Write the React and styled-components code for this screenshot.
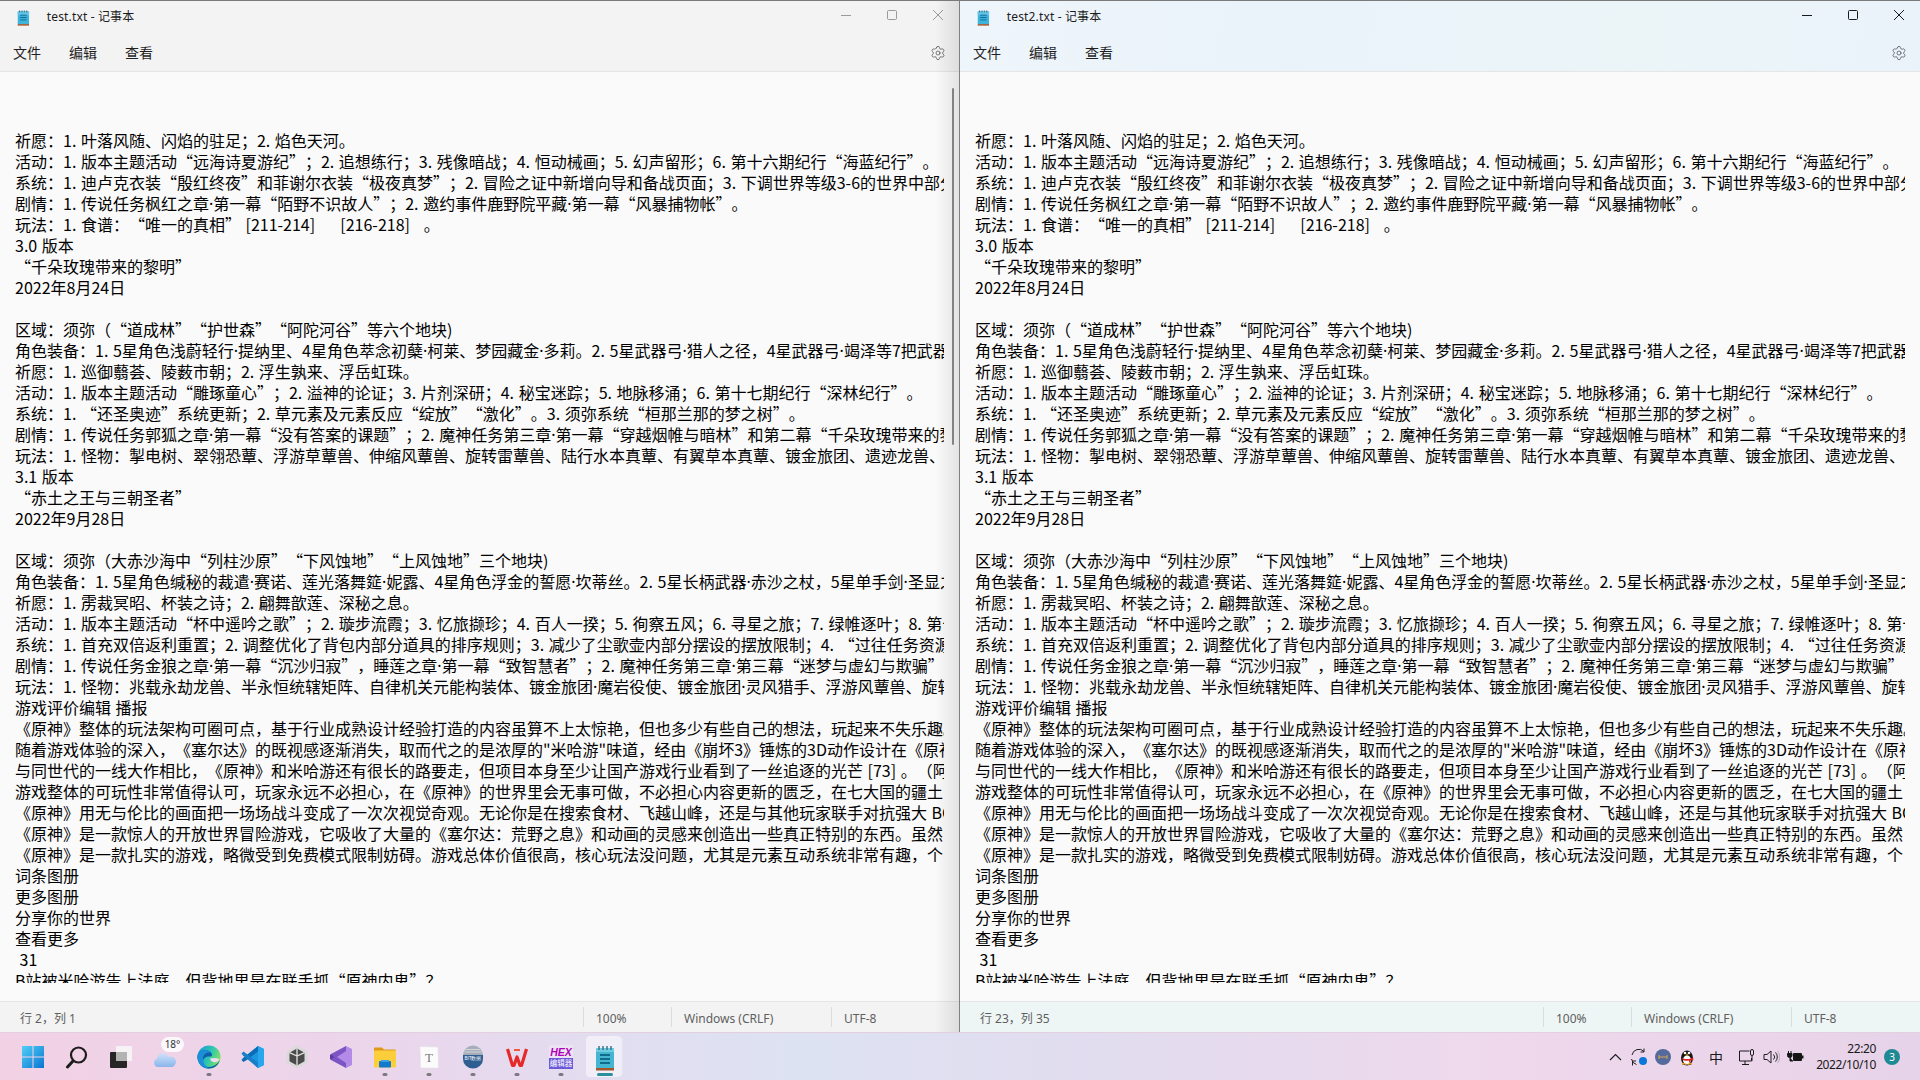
import React from "react";
import styled, { createGlobalStyle } from "styled-components";
import { Settings } from "lucide-react";

const LINES = [
  "祈愿：1. 叶落风随、闪焰的驻足；2. 焰色天河。",
  "活动：1. 版本主题活动“远海诗夏游纪”；2. 追想练行；3. 残像暗战；4. 恒动械画；5. 幻声留形；6. 第十六期纪行“海蓝纪行”。",
  "系统：1. 迪卢克衣装“殷红终夜”和菲谢尔衣装“极夜真梦”；2. 冒险之证中新增向导和备战页面；3. 下调世界等级3-6的世界中部分任务",
  "剧情：1. 传说任务枫红之章·第一幕“陌野不识故人”；2. 邀约事件鹿野院平藏·第一幕“风暴捕物帐”。",
  "玩法：1. 食谱：“唯一的真相” [211-214] 　 [216-218]   。",
  "3.0 版本",
  "“千朵玫瑰带来的黎明”",
  "2022年8月24日",
  "",
  "区域：须弥（“道成林”“护世森”“阿陀河谷”等六个地块)",
  "角色装备：1. 5星角色浅蔚轻行·提纳里、4星角色萃念初蘖·柯莱、梦园藏金·多莉。2. 5星武器弓·猎人之径，4星武器弓·竭泽等7把武器",
  "祈愿：1. 巡御蘙荟、陵薮市朝；2. 浮生孰来、浮岳虹珠。",
  "活动：1. 版本主题活动“雕琢童心”；2. 溢神的论证；3. 片剂深研；4. 秘宝迷踪；5. 地脉移涌；6. 第十七期纪行“深林纪行”。",
  "系统：1. “还圣奥迹”系统更新；2. 草元素及元素反应“绽放”“激化”。3. 须弥系统“桓那兰那的梦之树”。",
  "剧情：1. 传说任务郭狐之章·第一幕“没有答案的课题”；2. 魔神任务第三章·第一幕“穿越烟帷与暗林”和第二幕“千朵玫瑰带来的黎明”",
  "玩法：1. 怪物：掣电树、翠翎恐蕈、浮游草蕈兽、伸缩风蕈兽、旋转雷蕈兽、陆行水本真蕈、有翼草本真蕈、镀金旅团、遗迹龙兽、",
  "3.1 版本",
  "“赤土之王与三朝圣者”",
  "2022年9月28日",
  "",
  "区域：须弥（大赤沙海中“列柱沙原”“下风蚀地”“上风蚀地”三个地块)",
  "角色装备：1. 5星角色缄秘的裁遣·赛诺、莲光落舞筵·妮露、4星角色浮金的誓愿·坎蒂丝。2. 5星长柄武器·赤沙之杖，5星单手剑·圣显之钥",
  "祈愿：1. 雳裁冥昭、杯装之诗；2. 翩舞歆莲、深秘之息。",
  "活动：1. 版本主题活动“杯中遥吟之歌”；2. 璇步流霞；3. 忆旅撷珍；4. 百人一揆；5. 徇察五风；6. 寻星之旅；7. 绿帷逐叶；8. 第十八期",
  "系统：1. 首充双倍返利重置；2. 调整优化了背包内部分道具的排序规则；3. 减少了尘歌壶内部分摆设的摆放限制；4. “过往任务资源",
  "剧情：1. 传说任务金狼之章·第一幕“沉沙归寂”，睡莲之章·第一幕“致智慧者”；2. 魔神任务第三章·第三幕“迷梦与虚幻与欺骗”；",
  "玩法：1. 怪物：兆载永劫龙兽、半永恒统辖矩阵、自律机关元能构装体、镀金旅团·魔岩役使、镀金旅团·灵风猎手、浮游风蕈兽、旋转",
  "游戏评价编辑 播报",
  "《原神》整体的玩法架构可圈可点，基于行业成熟设计经验打造的内容虽算不上太惊艳，但也多少有些自己的想法，玩起来不失乐趣。",
  "随着游戏体验的深入，《塞尔达》的既视感逐渐消失，取而代之的是浓厚的\"米哈游\"味道，经由《崩坏3》锤炼的3D动作设计在《原神》",
  "与同世代的一线大作相比，《原神》和米哈游还有很长的路要走，但项目本身至少让国产游戏行业看到了一丝追逐的光芒 [73] 。（阿",
  "游戏整体的可玩性非常值得认可，玩家永远不必担心，在《原神》的世界里会无事可做，不必担心内容更新的匮乏，在七大国的疆土",
  "《原神》用无与伦比的画面把一场场战斗变成了一次次视觉奇观。无论你是在搜索食材、飞越山峰，还是与其他玩家联手对抗强大 BOSS",
  "《原神》是一款惊人的开放世界冒险游戏，它吸收了大量的《塞尔达：荒野之息》和动画的灵感来创造出一些真正特别的东西。虽然",
  "《原神》是一款扎实的游戏，略微受到免费模式限制妨碍。游戏总体价值很高，核心玩法没问题，尤其是元素互动系统非常有趣，个",
  "词条图册",
  "更多图册",
  "分享你的世界",
  "查看更多",
  " 31",
  "B站被米哈游告上法庭，但背地里是在联手抓“原神内鬼”？",
];

const GlobalStyle = createGlobalStyle`
  html, body { margin: 0; padding: 0; width: 1920px; height: 1080px; overflow: hidden; }
  #root { width: 1920px; height: 1080px; }
  * { box-sizing: border-box; }
`;

const UI_FONT = `"Noto Sans", "Noto Sans CJK SC", sans-serif`;

const Desktop = styled.div`
  width: 1920px;
  height: 1080px;
  display: flex;
  flex-direction: column;
  font-family: ${UI_FONT};
  overflow: hidden;
`;
const Windows = styled.div`
  flex: 1;
  display: flex;
  min-height: 0;
`;
const Window = styled.section`
  position: relative;
  display: flex;
  flex-direction: column;
  width: ${(p) => (p.$active ? "961px" : "959px")};
  border-top: 1px solid #7a7a7a;
  border-left: ${(p) => (p.$active ? "1px solid #808080" : "none")};
  background: #fafafa;
`;
const Chrome = styled.div`
  background: ${(p) =>
    p.$active
      ? "linear-gradient(100deg, #eef5fb 0%, #eaf3fa 35%, #ebf5f8 70%, #eaf3fa 100%)"
      : "#f3f3f3"};
`;
const TitleBar = styled.div`
  height: 34px;
  display: flex;
  align-items: center;
  padding-left: 17px;
  color: #1c1c1c;
  font-size: 12px;
`;
const TitleText = styled.span`
  margin-left: 17px;
  padding-bottom: 5px;
  letter-spacing: 0.15px;
`;
const Controls = styled.div`
  margin-left: auto;
  display: flex;
  align-items: center;
  padding: 0 16px 6px 0;
  gap: 36px;
  color: ${(p) => (p.$active ? "#1a1a1a" : "#9a9a9a")};
`;
const MenuBar = styled.nav`
  height: 37px;
  display: flex;
  align-items: center;
  padding: 0 13px 1px;
  gap: 28px;
  border-bottom: 1px solid #e5e5e5;
  font-size: 14px;
  color: #1f1f1f;
`;
const MenuItem = styled.span`
  line-height: 20px;
`;
const Gear = styled(Settings)`
  margin-left: auto;
  color: #404040;
`;
const Editor = styled.main`
  flex: 1;
  min-height: 0;
  padding: 58px 15px 18px 15px;
  display: flex;
`;
const TextArea = styled.div`
  flex: 1;
  min-width: 0;
  overflow: hidden;
  font-family: "Noto Sans CJK SC", "Liberation Sans", sans-serif;
  font-size: 16px;
  line-height: 21px;
  word-spacing: 1px;
  color: #000;
  text-spacing-trim: space-all;
`;
const TextLine = styled.div`
  height: 21px;
  white-space: pre;
`;
const MiddleDot = styled.span`
  font-family: "Noto Sans", sans-serif;
`;
const StatusBar = styled.footer`
  height: 31px;
  flex: none;
  display: flex;
  align-items: center;
  border-top: 1px solid #e5e5e5;
  font-size: 12px;
  color: #5f5f5f;
  background: ${(p) => (p.$active ? "#eef5f5" : "#f3f3f3")};
`;
const StatusCell = styled.div`
  width: ${(p) => p.$w}px;
  height: 20px;
  line-height: 23px;
  padding-left: ${(p) => (p.$first ? 20 : 12)}px;
  border-left: ${(p) => (p.$first ? "none" : "1px solid #dcdcdc")};
  flex: none;
`;
const EdgeShadow = styled.div`
  position: absolute;
  top: 0;
  right: 0;
  bottom: 0;
  width: 24px;
  background: linear-gradient(90deg, rgba(0, 0, 0, 0), rgba(0, 0, 0, 0.09));
  pointer-events: none;
`;
const ScrollThumb = styled.div`
  position: absolute;
  top: 87px;
  right: 5px;
  width: 2px;
  height: 357px;
  border-radius: 1px;
  background: #8c8c8c;
`;

const TaskbarWrap = styled.footer`
  height: 48px;
  flex: none;
  display: flex;
  align-items: center;
  padding-left: 11px;
  border-top: 1px solid #e3cfe0;
  background: linear-gradient(90deg, #f2d1e4 0%, #ebd6ec 20%, #e0dff1 34%, #dde2f2 42%, #e2dcef 58%, #efd8ec 78%, #e7d3e9 100%);
`;
const AppSlot = styled.div`
  position: relative;
  width: 44px;
  height: 47px;
  display: flex;
  align-items: center;
  justify-content: center;
`;
const ActiveTile = styled.div`
  position: absolute;
  left: 3px;
  top: 3px;
  width: 35px;
  height: 41px;
  border-radius: 4px;
  background: rgba(255, 255, 255, 0.5);
  box-shadow: 2px 0 0 -0.5px rgba(255, 255, 255, 0.4);
`;
const RunDot = styled.div`
  position: absolute;
  bottom: 4px;
  left: 50%;
  transform: translateX(-50%);
  width: ${(p) => (p.$active ? 16 : 5)}px;
  height: 3px;
  border-radius: 2px;
  background: ${(p) => (p.$active ? "#2c8f9d" : "#7c7a80")};
`;
const IconBox = styled.div`
  position: relative;
  width: 24px;
  height: 24px;
`;
const TempBadge = styled.span`
  position: absolute;
  top: -8px;
  left: 8px;
  width: 23px;
  height: 15px;
  border-radius: 8px;
  background: #fbf7fb;
  font-size: 10px;
  line-height: 15px;
  text-align: center;
  color: #333;
`;
const Tray = styled.div`
  margin-left: auto;
  display: flex;
  align-items: center;
  height: 100%;
  color: #1a1a1a;
`;
const TrayIcon = styled.div`
  width: ${(p) => p.$w || 24}px;
  display: flex;
  align-items: center;
  justify-content: center;
`;
const ImeLabel = styled.span`
  font-family: "Noto Sans CJK SC", sans-serif;
  font-size: 14px;
`;
const Clock = styled.div`
  width: 68px;
  text-align: right;
  font-size: 12px;
  line-height: 16px;
  letter-spacing: -0.4px;
  color: #1a1a1a;
`;
const NotifyBadge = styled.div`
  width: 16px;
  height: 16px;
  margin: 0 20px 0 8px;
  border-radius: 50%;
  background: #1f8a93;
  color: #fff;
  font-size: 10px;
  line-height: 16px;
  text-align: center;
`;

const NotepadIcon = ({ size = 16 }) => (
  <svg width={size * 0.8} height={size} viewBox="0 0 13 17">
    <rect x="0.5" y="1.5" width="12" height="14" rx="1" fill="#3eb4dc" />
    <rect x="0.5" y="1.5" width="12" height="4" fill="#62c6e6" />
    <path d="M2.5 0.5v2M5 0.5v2M7.5 0.5v2M10 0.5v2" stroke="#35647a" strokeWidth="1" />
    <path d="M3 5.5h7M3 8h7M3 10.5h7" stroke="#0f6a96" strokeWidth="1" />
    <rect x="0.5" y="15" width="12" height="1.6" fill="#a9582c" />
  </svg>
);

const Minimize = () => (
  <svg width="10" height="10" viewBox="0 0 10 10"><path d="M0 5.5h10" stroke="currentColor" /></svg>
);
const Maximize = () => (
  <svg width="10" height="10" viewBox="0 0 10 10"><rect x="0.5" y="0.5" width="9" height="9" rx="1" fill="none" stroke="currentColor" /></svg>
);
const CloseX = () => (
  <svg width="10" height="10" viewBox="0 0 10 10"><path d="M0 0l10 10M10 0L0 10" stroke="currentColor" /></svg>
);

const StartIcon = () => (
  <svg width="24" height="24" viewBox="0 0 24 24">
    <defs>
      <linearGradient id="st" x1="0" y1="0" x2="1" y2="1">
        <stop offset="0" stopColor="#4fd0f5" />
        <stop offset="1" stopColor="#0a74d2" />
      </linearGradient>
    </defs>
    <path d="M1 1h10.5v10.5H1zM12.5 1H23v10.5H12.5zM1 12.5h10.5V23H1zM12.5 12.5H23V23H12.5z" fill="url(#st)" />
  </svg>
);
const SearchIcon = () => (
  <svg width="24" height="24" viewBox="0 0 24 24" fill="none">
    <circle cx="13.5" cy="10" r="7.5" stroke="#1d1d1d" strokeWidth="2.2" />
    <path d="M8 16l-5.5 6" stroke="#1d1d1d" strokeWidth="3" strokeLinecap="round" />
  </svg>
);
const TaskViewIcon = () => (
  <svg width="24" height="24" viewBox="0 0 24 24">
    <rect x="7" y="1" width="16" height="15" rx="1" fill="#f6f2f6" />
    <rect x="1" y="7" width="17" height="16" rx="1" fill="#262626" />
    <rect x="7" y="7" width="11" height="9" fill="#b3b3b3" />
  </svg>
);
const WeatherIcon = () => (
  <svg width="24" height="24" viewBox="0 0 24 24">
    <defs>
      <linearGradient id="cl" x1="0" y1="0" x2="0" y2="1">
        <stop offset="0" stopColor="#cfe0f8" />
        <stop offset="1" stopColor="#8ab6ec" />
      </linearGradient>
    </defs>
    <path d="M5 22a4.2 4.2 0 0 1-1-8.2 6 6 0 0 1 11.4-2A5.2 5.2 0 0 1 19.5 22z" fill="url(#cl)" />
  </svg>
);
const EdgeIcon = () => (
  <svg width="24" height="24" viewBox="0 0 24 24">
    <defs>
      <linearGradient id="eg" x1="0" y1="0.2" x2="1" y2="0.6">
        <stop offset="0" stopColor="#1c9ad6" />
        <stop offset="0.55" stopColor="#2fc7b0" />
        <stop offset="1" stopColor="#86e25a" />
      </linearGradient>
    </defs>
    <circle cx="12" cy="12" r="11.5" fill="url(#eg)" />
    <path d="M23 15c-1.500 5-6 8.500-11 8.500C5 23.500 .5 18 .5 12 .5 8 4 5 8 5c4 0 7 2.500 7 5 0 1-1 1.500-3 1.500-3 0-6 1.500-6 5.500 0 3 3 5 6 5 4 0 9-3 11-7z" fill="#0c5fa8" />
    <path d="M.5 12C.5 8 4 5 8 5c3 0 5.500 1.300 6.500 3C10 6.500 6 9.500 6 14c0 4 3 8 6.500 9.500C5 24 .5 18 .5 12z" fill="#1b8fd8" />
    <path d="M13 13.500c3-1 6.500-.5 9.500.5-1 2-2.500 3-4.500 3.200-2.500.2-4.500-1.500-5-3.700z" fill="#ecdcf0" />
  </svg>
);
const VSCodeIcon = () => (
  <svg width="24" height="24" viewBox="0 0 24 24">
    <path d="M17 1l6 3v16l-6 3L6 12.500z" fill="#1d96e0" />
    <path d="M17 1L2 13l-1.500 2 2 2 4-2.500L17 6.500z" fill="#0a6db5" />
    <path d="M17 23L2 10.500.5 8.500l2-2 14.500 11z" fill="#1780c8" />
    <path d="M17 1l6 3v16l-6 3z" fill="#2aa6ee" />
  </svg>
);
const UnityIcon = () => (
  <svg width="24" height="24" viewBox="0 0 24 24">
    <path d="M12 .5l10.500 5.700v11.600L12 23.500 1.500 17.800V6.200z" fill="#dadada" />
    <path d="M12 3.500l7.500 4.200v8.600L12 20.500l-7.500-4.200V7.700z" fill="#4a4a4a" />
    <path d="M12 3.500v7.500l7.500-3.300M12 11L4.500 7.700M12 11v9.500" stroke="#e4e4e4" strokeWidth="1.300" fill="none" />
  </svg>
);
const VSIcon = () => (
  <svg width="24" height="24" viewBox="0 0 24 24">
    <path d="M17 1l6 3v16l-6 3L7 12z" fill="#b38ae8" />
    <path d="M17 1L2 9v6l15 8v-5l-9-6 9-6z" fill="#7d54c4" />
    <path d="M2 9l-1 1v4l1 1 3-3z" fill="#5f3ba6" />
  </svg>
);
const ExplorerIcon = () => (
  <svg width="24" height="24" viewBox="0 0 24 24">
    <path d="M1 3.500A1 1 0 0 1 2 2.500h7l2 2h11.500V9H1z" fill="#e09a18" />
    <rect x="1" y="5.500" width="22" height="17" rx="1" fill="#fcce3c" />
    <rect x="6" y="16" width="12" height="6.500" rx="1" fill="#1478cc" />
    <rect x="8" y="15" width="8" height="2" fill="#3ca0e4" />
  </svg>
);
const SvgLabel = styled.text`
  font-family: ${(p) => p.$font || `"Liberation Sans", sans-serif`};
`;
const TyporaIcon = () => (
  <svg width="24" height="24" viewBox="0 0 24 24">
    <path d="M3 1.500l18 .5.500 21H3.500z" fill="#fbfbfb" stroke="#e3dbe3" strokeWidth="0.5" />
    <SvgLabel $font={`"Liberation Serif", serif`} x="12" y="17" fontSize="13" textAnchor="middle" fill="#777">T</SvgLabel>
  </svg>
);
const BadgeAppIcon = () => (
  <svg width="24" height="24" viewBox="0 0 24 24">
    <path d="M2 11a10 10.500 0 0 1 20 0z" fill="#a4adb8" />
    <path d="M2 10h20v4a10 9.500 0 0 1-20 0z" fill="#2f5f92" />
    <path d="M5 4.500h14M3.500 7h17" stroke="#d4d8dc" strokeWidth="1" />
    <SvgLabel x="12" y="14.500" fontSize="4.500" textAnchor="middle" fill="#fff">BIT数据</SvgLabel>
  </svg>
);
const WPSIcon = () => (
  <svg width="24" height="24" viewBox="0 0 24 24" fill="none">
    <path d="M2.500 4l5 16.500h1.500L12 12l3 8.500h1.500L21.500 4" stroke="#e62a2a" strokeWidth="3.200" strokeLinejoin="round" />
    <path d="M9 5h6" stroke="#f05a3a" strokeWidth="2" />
  </svg>
);
const HexIcon = () => (
  <svg width="24" height="24" viewBox="0 0 24 24">
    <rect width="24" height="24" fill="#ece4f2" />
    <SvgLabel x="12" y="10.500" fontSize="10.500" fontWeight="700" fontStyle="italic" textAnchor="middle" fill="#b000b8">HEX</SvgLabel>
    <rect y="13" width="24" height="11" fill="#6a58d8" />
    <SvgLabel $font={`"Noto Sans CJK SC", sans-serif`} x="12" y="21" fontSize="7.500" textAnchor="middle" fill="#fff">编辑器</SvgLabel>
  </svg>
);
const NotepadTaskIcon = () => (
  <svg width="24" height="28" viewBox="0 0 24 28">
    <rect x="3" y="3" width="18" height="22" rx="1" fill="#45b6d2" />
    <rect x="3" y="3" width="18" height="4" fill="#6fcbe0" />
    <path d="M6 1v4M10 1v4M14 1v4M18 1v4" stroke="#2f6f86" strokeWidth="1.400" />
    <path d="M7 10h10M7 14h10M7 18h10" stroke="#116c8c" strokeWidth="2" />
    <rect x="3" y="23" width="18" height="2.500" fill="#a4552a" />
  </svg>
);

const APPS = [
  { id: "start", Icon: StartIcon },
  { id: "search", Icon: SearchIcon },
  { id: "tasks", Icon: TaskViewIcon },
  { id: "weather", Icon: WeatherIcon, temp: "18°" },
  { id: "edge", Icon: EdgeIcon, run: true },
  { id: "code", Icon: VSCodeIcon },
  { id: "unity", Icon: UnityIcon },
  { id: "vs", Icon: VSIcon },
  { id: "explorer", Icon: ExplorerIcon, run: true },
  { id: "typora", Icon: TyporaIcon, run: true },
  { id: "badge", Icon: BadgeAppIcon, run: true },
  { id: "wps", Icon: WPSIcon, run: true },
  { id: "hex", Icon: HexIcon, run: true },
  { id: "notepad", Icon: NotepadTaskIcon, run: true, active: true },
];

const DocLine = ({ text }) => (
  <TextLine>
    {text.split("·").map((part, i) => (
      <React.Fragment key={i}>
        {i > 0 && <MiddleDot>·</MiddleDot>}
        {part}
      </React.Fragment>
    ))}
  </TextLine>
);

const NotepadWindow = ({ title, caret, active }) => (
  <Window $active={active}>
    <Chrome $active={active}>
      <TitleBar>
        <NotepadIcon />
        <TitleText>{title}</TitleText>
        <Controls $active={active}>
          <Minimize />
          <Maximize />
          <CloseX />
        </Controls>
      </TitleBar>
      <MenuBar>
        <MenuItem>文件</MenuItem>
        <MenuItem>编辑</MenuItem>
        <MenuItem>查看</MenuItem>
        <Gear size={16} strokeWidth={1} />
      </MenuBar>
    </Chrome>
    <Editor>
      <TextArea>
        {LINES.map((line, i) => (
          <DocLine key={i} text={line} />
        ))}
      </TextArea>
    </Editor>
    <StatusBar $active={active}>
      <StatusCell $first $w={583}>{caret}</StatusCell>
      <StatusCell $w={88}>100%</StatusCell>
      <StatusCell $w={160}>Windows (CRLF)</StatusCell>
      <StatusCell $w={100}>UTF-8</StatusCell>
    </StatusBar>
    {!active && <ScrollThumb />}
    {!active && <EdgeShadow />}
  </Window>
);

const Taskbar = () => (
  <TaskbarWrap>
    {APPS.map(({ id, Icon, run, active, temp }) => (
      <AppSlot key={id}>
        {active && <ActiveTile />}
        <IconBox>
          <Icon />
          {temp && <TempBadge>{temp}</TempBadge>}
        </IconBox>
        {run && <RunDot $active={active} />}
      </AppSlot>
    ))}
    <Tray>
      <TrayIcon $w={24}>
        <svg width="13" height="8" viewBox="0 0 13 8" fill="none"><path d="M1 7l5.500-5.500L12 7" stroke="#1a1a1a" strokeWidth="1.100" /></svg>
      </TrayIcon>
      <TrayIcon $w={24}>
        <svg width="18" height="18" viewBox="0 0 18 18" fill="none">
          <path d="M2 7a7 7 0 0 1 12-3.500M1.500 11a7 7 0 0 0 5 5.500M14 .5v3.500h-3.500M2.500 17.500V13H6" stroke="#222" strokeWidth="1" />
          <circle cx="13" cy="13" r="4" fill="#0a78d8" />
        </svg>
      </TrayIcon>
      <TrayIcon $w={24}>
        <svg width="16" height="16" viewBox="0 0 16 16">
          <circle cx="8" cy="8" r="8" fill="#54699c" />
          <path d="M4 6v4M12 6v4M4 8h8" stroke="#d8a94a" strokeWidth="1" />
        </svg>
      </TrayIcon>
      <TrayIcon $w={24}>
        <svg width="16" height="18" viewBox="0 0 16 18">
          <ellipse cx="8" cy="10" rx="6" ry="7.500" fill="#161616" />
          <ellipse cx="8" cy="12" rx="4" ry="4.500" fill="#fbfbfb" />
          <circle cx="6" cy="5" r="1.300" fill="#fff" />
          <circle cx="10" cy="5" r="1.300" fill="#fff" />
          <path d="M2 9.500c3 2 9 2 12 0l.5 2c-1 1-2 1-3 1v2h-1.500v-2c-2 .5-4 .5-6-.5z" fill="#e02222" />
          <path d="M3 16.500c1-1 3-1 4 0M9 16.500c1-1 3-1 4 0" stroke="#f0a818" strokeWidth="1.400" />
          <path d="M6.500 7l1.500-1 1.500 1-1.500 1z" fill="#f0a818" />
        </svg>
      </TrayIcon>
      <TrayIcon $w={34}><ImeLabel>中</ImeLabel></TrayIcon>
      <TrayIcon $w={27}>
        <svg width="18" height="18" viewBox="0 0 18 18" fill="none" stroke="#1a1a1a" strokeWidth="1">
          <path d="M11.500 3H1.500v10h12v-3" />
          <path d="M7 13v3M4 16.500h7" />
          <rect x="12.500" y="1.500" width="3" height="6" rx="1.500" fill="#f0dcee" />
          <path d="M14 7.500V13" />
        </svg>
      </TrayIcon>
      <TrayIcon $w={22}>
        <svg width="17" height="14" viewBox="0 0 17 14" fill="none" stroke="#1f1f1f" strokeWidth="1">
          <path d="M1 4.500h3L8 1v12L4 9.500H1z" />
          <path d="M10.500 4.500a3.500 3.500 0 0 1 0 5M12.500 2.500a6.500 6.500 0 0 1 0 9" />
          <path d="M14.500 1a9 9 0 0 1 0 12" stroke="#b9a8bc" />
        </svg>
      </TrayIcon>
      <TrayIcon $w={26}>
        <svg width="17" height="14" viewBox="0 0 17 14">
          <rect x="6" y="3" width="9" height="8" rx="1" fill="#161616" />
          <rect x="15" y="5.500" width="1.500" height="3" fill="#161616" />
          <path d="M1.500 1v2.500M4 1v2.500M.5 3.500h4.500v2a2 2 0 0 1-2 2h-.5a2 2 0 0 1-2-2zM3 7.500V11h3" stroke="#161616" strokeWidth="1" fill="#161616" />
        </svg>
      </TrayIcon>
      <Clock>
        22:20
        <br />
        2022/10/10
      </Clock>
      <NotifyBadge>3</NotifyBadge>
    </Tray>
  </TaskbarWrap>
);

export default function App() {
  return (
    <>
      <GlobalStyle />
      <Desktop>
        <Windows>
          <NotepadWindow title="test.txt - 记事本" caret="行 2，列 1" />
          <NotepadWindow title="test2.txt - 记事本" caret="行 23，列 35" active />
        </Windows>
        <Taskbar />
      </Desktop>
    </>
  );
}
